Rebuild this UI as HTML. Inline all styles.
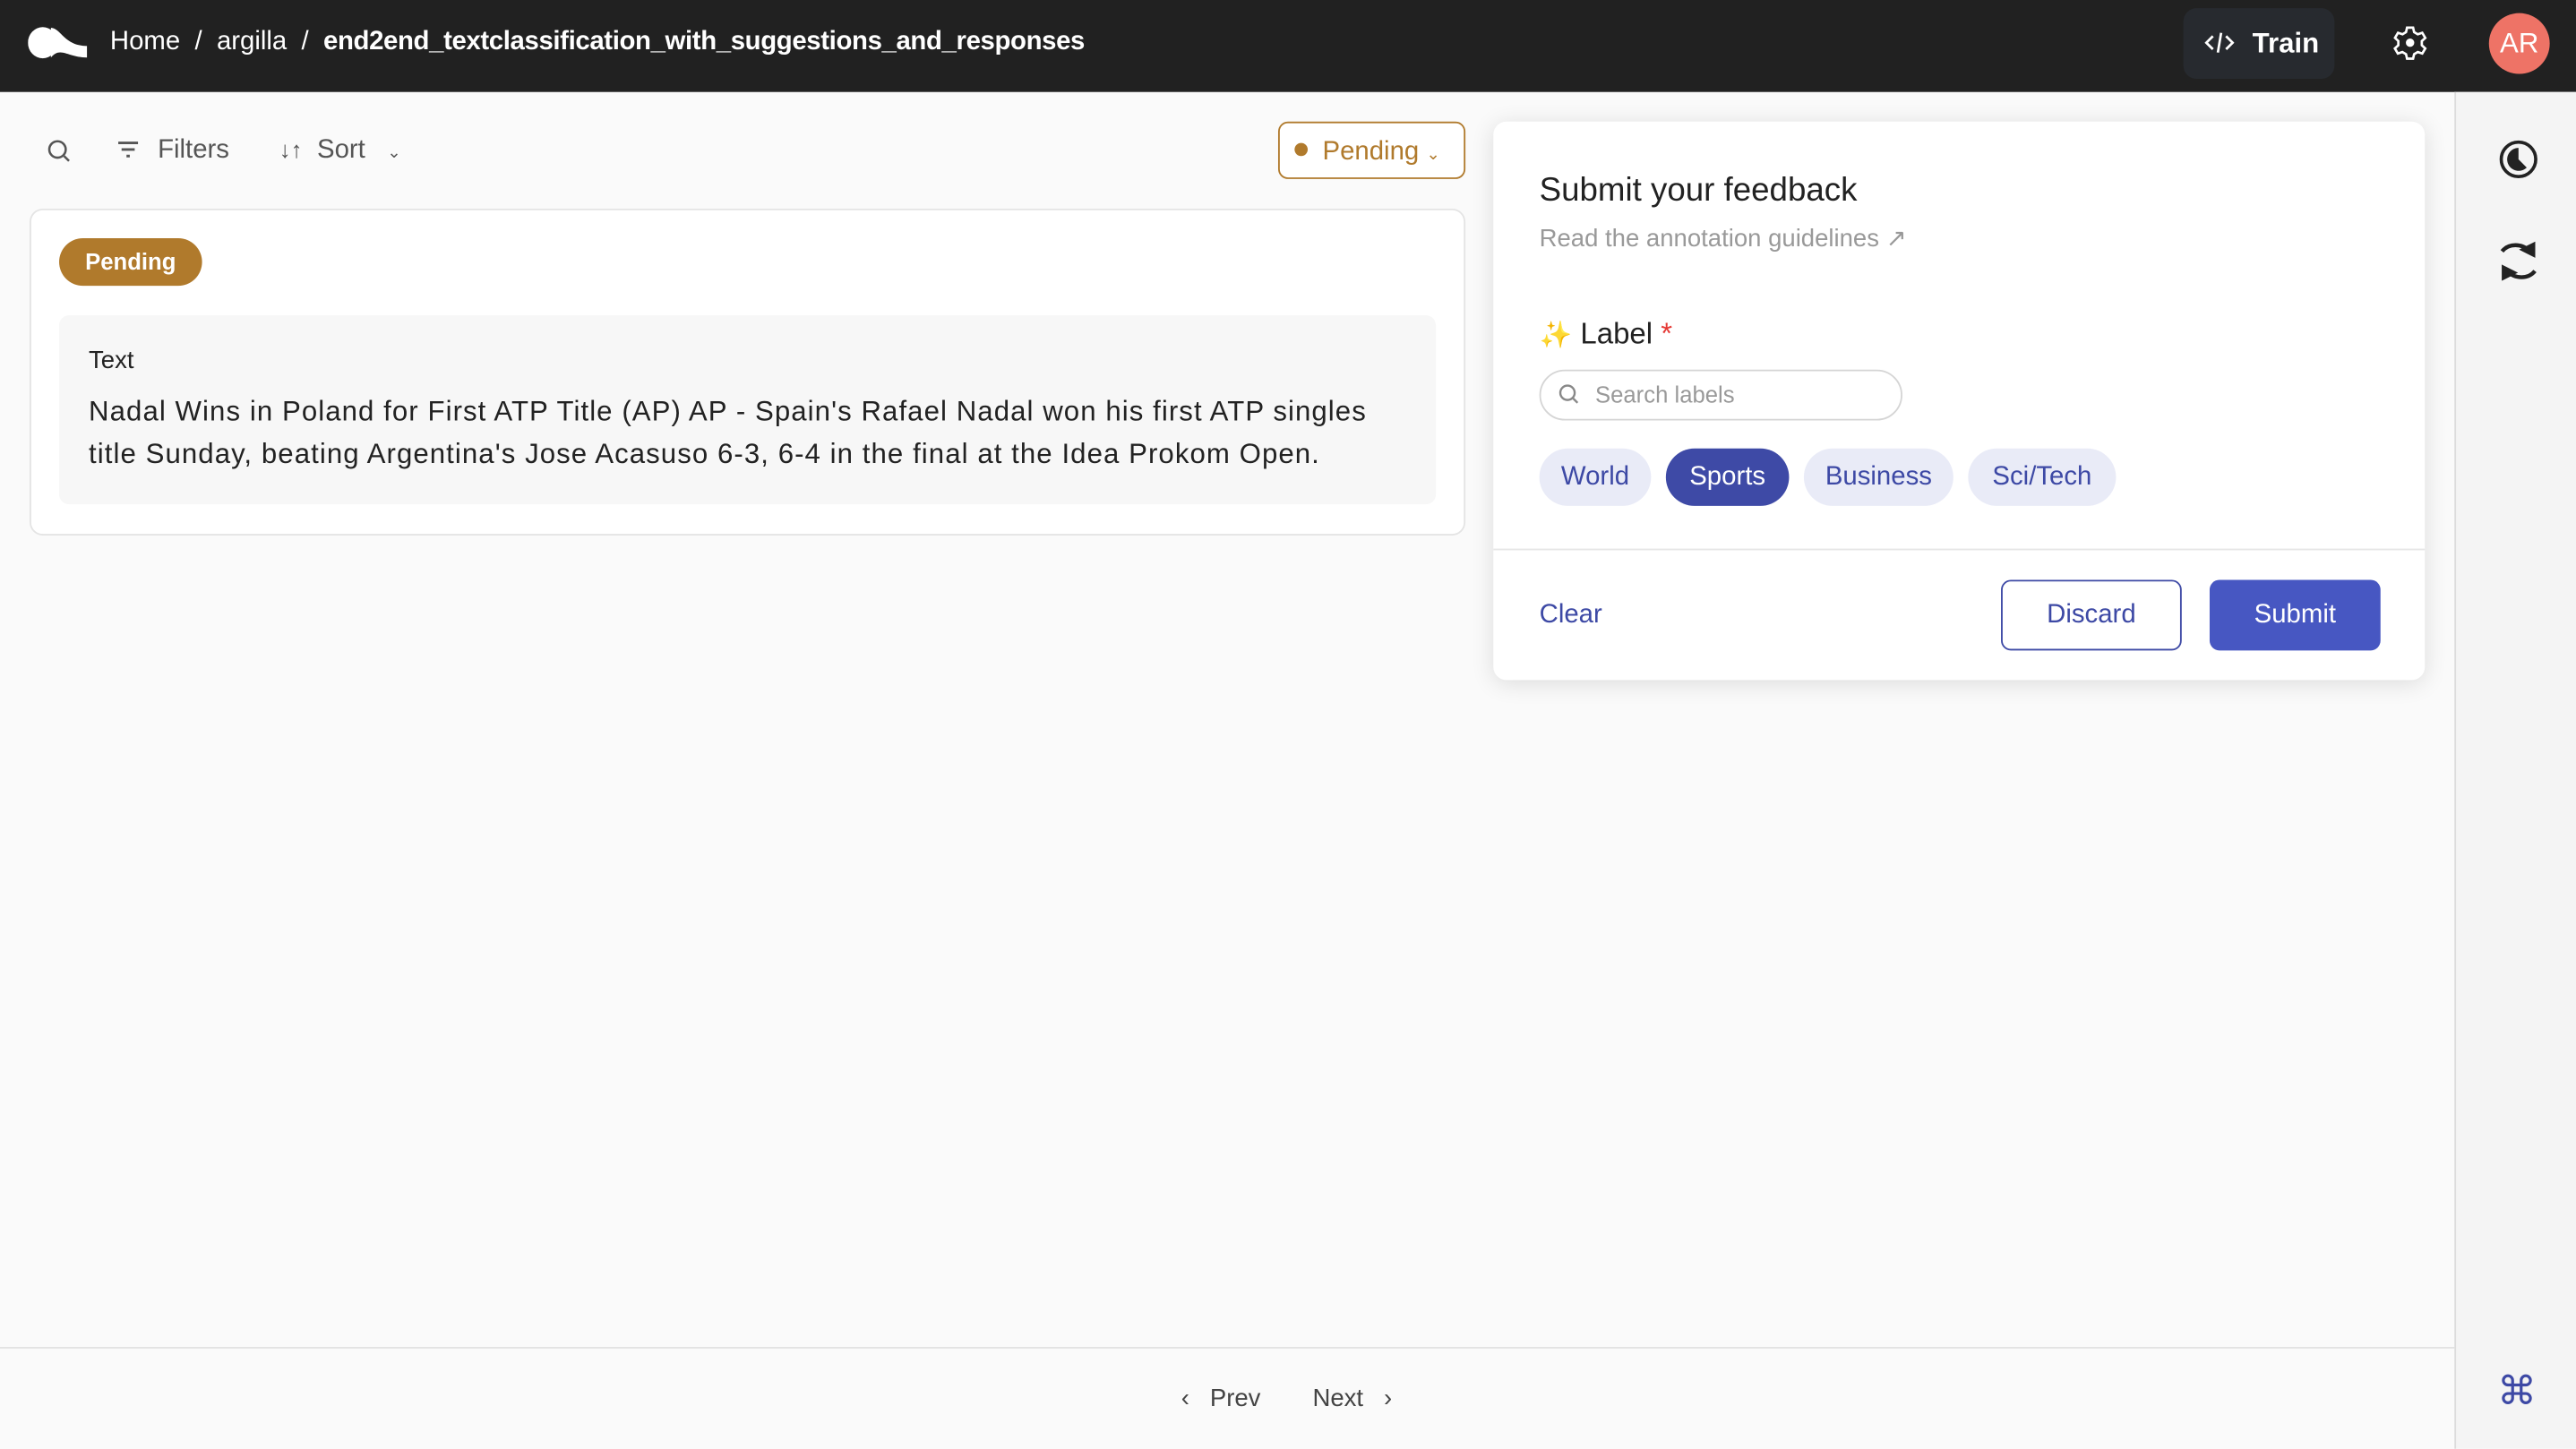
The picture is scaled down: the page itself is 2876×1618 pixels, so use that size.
<!DOCTYPE html>
<html><head><meta charset="utf-8"><style>
*{box-sizing:border-box;margin:0;padding:0}
html,body{width:2876px;height:1618px;overflow:hidden;background:#fafafa}
#r{width:1568px;height:882px;transform:scale(1.83418);transform-origin:0 0;position:relative;font-family:"Liberation Sans",sans-serif;color:#222}
.a{position:absolute}
.hdr{left:0;top:0;width:1568px;height:56px;background:#212121;color:#fff}
.chip{position:absolute;top:273px;height:35px;border-radius:18px;background:#e9ebf7;color:#3d49a5;font-size:16px;line-height:35px;text-align:center}
</style></head><body><div id="r">
<div class="a hdr">
 <svg class="a" style="left:17px;top:16px" width="36" height="20" viewBox="0 0 36 20"><ellipse cx="9" cy="10" rx="9" ry="9.5" fill="#fff"/><path d="M14 1 C20 1 22 12 36 12 L36 19 C24 19 20 12 14 19Z" fill="#fff"/></svg>
 <div class="a" style="left:67px;top:17px;font-size:16px;white-space:nowrap">Home &nbsp;/ &nbsp;argilla &nbsp;/ &nbsp;<b style="letter-spacing:-0.2px">end2end_textclassification_with_suggestions_and_responses</b></div>
 <div class="a" style="left:1329px;top:5px;width:92px;height:43px;background:#272a2f;border-radius:8px"></div>
 <svg class="a" style="left:1342px;top:18px" width="18" height="16" viewBox="0 0 18 16" fill="none" stroke="#fff" stroke-width="1.5"><path d="M5 4L1 8l4 4M13 4l4 4-4 4M10 2L8 14"/></svg>
 <div class="a" style="left:1371px;top:17px;font-size:17px;font-weight:bold">Train</div>
 <svg class="a" style="left:1456px;top:15px" width="22" height="22" viewBox="0 0 24 24" fill="none" stroke="#fff" stroke-width="1.6"><path d="M10 2h4l.7 3 2.4 1.4 3-1 2 3.4-2.3 2.1v2.8l2.3 2.1-2 3.4-3-1-2.4 1.4-.7 3h-4l-.7-3-2.4-1.4-3 1-2-3.4 2.3-2.1v-2.8L2 8.8l2-3.4 3 1L9.3 5z"/><circle cx="12" cy="12" r="2" fill="#fff"/></svg>
 <div class="a" style="left:1515px;top:8px;width:37px;height:37px;border-radius:50%;background:#ee7366;font-size:17px;line-height:37px;text-align:center">AR</div>
</div>
<div class="a" style="left:1494px;top:56px;width:74px;height:826px;background:#f4f4f4;border-left:1px solid #dcdcdc"></div>
<svg class="a" style="left:1521px;top:85px" width="24" height="24" viewBox="0 0 24 24"><circle cx="12" cy="12" r="10.5" fill="none" stroke="#222" stroke-width="2"/><path d="M12 5a7 7 0 1 0 5 12l-5-5z" fill="#222"/></svg>
<svg class="a" style="left:1520px;top:146px" width="26" height="26" viewBox="0 0 26 26" fill="none" stroke="#222" stroke-width="2.4"><path d="M3 7c4-5 12-5 17 0"/><path d="M16 6l6 3 0-6z" fill="#222"/><path d="M23 19c-4 5-12 5-17 0"/><path d="M10 20l-6-3 0 6z" fill="#222"/></svg>
<div class="a" style="left:1520px;top:833px;font-size:24px;color:#3d49a5">⌘</div>
<div class="a" style="left:0;top:820px;width:1494px;height:1px;background:#e2e2e2"></div>
<div class="a" style="left:719px;top:843px;font-size:15px;color:#444">‹ &nbsp;&nbsp;Prev</div>
<div class="a" style="left:799px;top:843px;font-size:15px;color:#444">Next &nbsp;&nbsp;›</div>
<svg class="a" style="left:28px;top:84px" width="16" height="16" viewBox="0 0 16 16" fill="none" stroke="#555" stroke-width="1.4"><circle cx="7" cy="7" r="5"/><path d="M11 11l3 3"/></svg>
<svg class="a" style="left:71px;top:85px" width="14" height="14" viewBox="0 0 14 14" stroke="#555" stroke-width="1.6"><path d="M1 2h12M3 6h8M6 10h2"/></svg>
<div class="a" style="left:96px;top:83px;font-size:16px;color:#555">Filters</div>
<div class="a" style="left:170px;top:83px;font-size:14px;color:#555">↓↑</div>
<div class="a" style="left:193px;top:83px;font-size:16px;color:#555">Sort &nbsp;&nbsp;<span style="font-size:10px">⌄</span></div>
<div class="a" style="left:778px;top:74px;width:114px;height:35px;border:1px solid #b07a2c;border-radius:6px;background:#fff;color:#b07a2c;font-size:16px;line-height:35px;padding-left:26px">Pending <span style="font-size:10px">⌄</span></div>
<div class="a" style="left:788px;top:87px;width:8px;height:8px;border-radius:50%;background:#b07a2c"></div>
<div class="a" style="left:18px;top:127px;width:874px;height:199px;background:#fff;border:1px solid #e4e4e4;border-radius:8px"></div>
<div class="a" style="left:36px;top:145px;width:87px;height:29px;border-radius:15px;background:#b07a2c;color:#fff;font-size:14px;font-weight:bold;line-height:29px;text-align:center">Pending</div>
<div class="a" style="left:36px;top:192px;width:838px;height:115px;background:#f7f7f7;border-radius:6px"></div>
<div class="a" style="left:54px;top:211px;font-size:15px">Text</div>
<div class="a" style="left:54px;top:238px;width:800px;font-size:17px;line-height:26px;letter-spacing:0.58px">Nadal Wins in Poland for First ATP Title (AP) AP - Spain's Rafael Nadal won his first ATP singles title Sunday, beating Argentina's Jose Acasuso 6-3, 6-4 in the final at the Idea Prokom Open.</div>
<div class="a" style="left:909px;top:74px;width:567px;height:340px;background:#fff;border-radius:8px;box-shadow:0 2px 14px rgba(0,0,0,.12)"></div>
<div class="a" style="left:937px;top:105px;font-size:20px">Submit your feedback</div>
<div class="a" style="left:937px;top:136px;font-size:15px;color:#999">Read the annotation guidelines ↗</div>
<div class="a" style="left:937px;top:193px;font-size:18px"><span style="color:#f3c74a;font-size:16px">✨</span> Label <span style="color:#e53935">*</span></div>
<div class="a" style="left:937px;top:225px;width:221px;height:31px;border:1px solid #d5d5d5;border-radius:16px;color:#999;font-size:14px;line-height:29px;padding-left:33px">Search labels</div>
<svg class="a" style="left:948px;top:233px" width="14" height="14" viewBox="0 0 16 16" fill="none" stroke="#888" stroke-width="1.5"><circle cx="7" cy="7" r="5"/><path d="M11 11l3 3"/></svg>
<div class="chip" style="left:937px;width:68px">World</div>
<div class="chip" style="left:1014px;width:75px;background:#3e4aa6;color:#fff">Sports</div>
<div class="chip" style="left:1098px;width:91px">Business</div>
<div class="chip" style="left:1198px;width:90px">Sci/Tech</div>
<div class="a" style="left:909px;top:334px;width:567px;height:1px;background:#e6e6e6"></div>
<div class="a" style="left:937px;top:366px;font-size:16px;color:#3d49a5">Clear</div>
<div class="a" style="left:1218px;top:353px;width:110px;height:43px;border:1px solid #3d49a5;border-radius:6px;color:#3d49a5;font-size:16px;line-height:41px;text-align:center">Discard</div>
<div class="a" style="left:1345px;top:353px;width:104px;height:43px;background:#4757c2;border-radius:6px;color:#fff;font-size:16px;line-height:43px;text-align:center">Submit</div>
</div></body></html>
